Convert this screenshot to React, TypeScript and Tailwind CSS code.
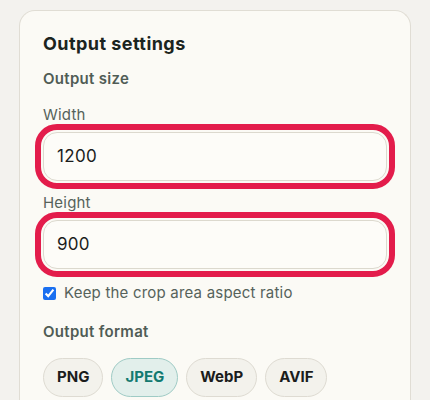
import React from 'react';

const formats = ['PNG', 'JPEG', 'WebP', 'AVIF'];

const SizeField: React.FC<{ label: string; value: string; className?: string }> = ({ label, value, className }) => (
  <div className={className}>
    <label className="block text-[15px] leading-5 tracking-[0.2px] text-[#56625b] mb-[7px]">{label}</label>
    <div className="h-[49px] rounded-[14px] border border-[#dcd9ce] bg-[#fdfcf8] outline-[6px] outline-solid outline-offset-[2px] outline-[#e31c4b] flex items-center px-[13px]">
      <span className="text-[17px] tracking-[0.3px] text-[#1b1d1c]">{value}</span>
    </div>
  </div>
);

const App: React.FC = () => {
  return (
    <div className="h-[400px] overflow-hidden bg-[#f3f2ee] pt-[10px] px-[19px] font-['Inter',sans-serif]">
      <div className="rounded-t-[16px] border border-b-0 border-[#e0ddd4] bg-[#fbfaf5] px-[23px] pt-[21px] pb-6">
        <h2 className="text-[18px] leading-6 font-bold tracking-[0.45px] text-[#1b2420]">Output settings</h2>
        <h3 className="mt-[13px] text-[15px] leading-5 font-semibold tracking-[0.3px] text-[#505c55]">Output size</h3>

        <SizeField label="Width" value="1200" className="mt-[16px]" />
        <SizeField label="Height" value="900" className="mt-[12px]" />

        <label className="mt-[14px] flex items-center gap-[8px] text-[15px] leading-5 tracking-[0.2px] text-[#56625b]">
          <input type="checkbox" checked readOnly className="w-[13px] h-[13px] m-0 accent-[#1a6ff0]" />
          Keep the crop area aspect ratio
        </label>

        <h3 className="mt-[19px] text-[15px] leading-5 font-semibold tracking-[0.3px] text-[#505c55]">Output format</h3>

        <div className="mt-[16px] flex gap-[8px]">
          {formats.map((f) => (
            <button
              key={f}
              className={
                f === 'JPEG'
                  ? 'h-[39px] px-[13px] rounded-full border border-[#9fcbc5] bg-[#e2efeb] text-[15px] font-bold text-[#137a70]'
                  : 'h-[39px] px-[13px] rounded-full border border-[#dedbd2] bg-[#f3f2ec] text-[15px] font-bold text-[#1b1d1c]'
              }
            >
              {f}
            </button>
          ))}
        </div>
      </div>
    </div>
  );
};

export default App;
